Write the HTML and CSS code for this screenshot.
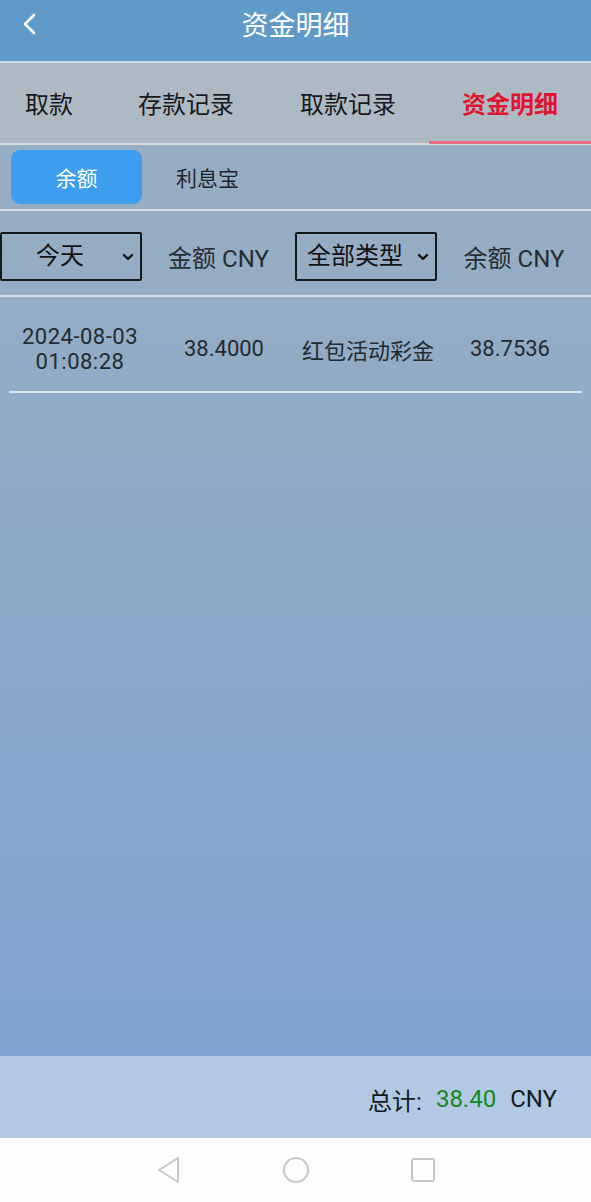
FILE: index.html
```html
<!DOCTYPE html>
<html lang="zh-CN">

<head>
  <meta charset="UTF-8">
  <meta name="viewport" content="width=device-width, initial-scale=1.0">
  <title>资金明细</title>
  <link rel="stylesheet" href="styles.css">
</head>

<body>
  <div class="page">
    <!-- Header -->
    <header class="header">
      <a class="back" href="#">
        <svg width="18" height="24" viewBox="0 0 18 24">
          <path d="M14 3 L5 12 L14 21" fill="none" stroke="#fff" stroke-width="2.6" stroke-linecap="round" stroke-linejoin="round" />
        </svg>
      </a>
      <h1>资金明细</h1>
    </header>

    <!-- Tabs -->
    <nav class="tabs">
      <a class="tab" href="#">取款</a>
      <a class="tab" href="#">存款记录</a>
      <a class="tab" href="#">取款记录</a>
      <a class="tab active" href="#">资金明细</a>
    </nav>

    <div class="subtabs">
      <button class="subtab active">余额</button>
      <button class="subtab">利息宝</button>
    </div>

    <div class="content">
      <div class="filters">
        <div class="cell">
          <div class="select-wrap">
            <select class="select">
              <option>今天</option>
              <option>昨天</option>
              <option>近7天</option>
            </select>
            <svg class="arrow" width="12" height="8" viewBox="0 0 12 8">
              <path d="M2 2 L6 6 L10 2" fill="none" stroke="#111" stroke-width="2.4" stroke-linecap="round" stroke-linejoin="round" />
            </svg>
          </div>
        </div>
        <div class="cell">金额 CNY</div>
        <div class="cell">
          <div class="select-wrap">
            <select class="select">
              <option>全部类型</option>
              <option>红包活动彩金</option>
            </select>
            <svg class="arrow" width="12" height="8" viewBox="0 0 12 8">
              <path d="M2 2 L6 6 L10 2" fill="none" stroke="#111" stroke-width="2.4" stroke-linecap="round" stroke-linejoin="round" />
            </svg>
          </div>
        </div>
        <div class="cell">余额 CNY</div>
      </div>

      <div class="rows">
        <div class="row">
          <div class="cell date">2024-08-03<br>01:08:28</div>
          <div class="cell">38.4000</div>
          <div class="cell">红包活动彩金</div>
          <div class="cell">38.7536</div>
        </div>
      </div>
    </div>

    <footer class="total">
      <span>总计:</span>
      <span class="amount">38.40</span>
      <span>CNY</span>
    </footer>

    <div class="sysbar">
      <svg width="26" height="28" viewBox="0 0 26 28">
        <path d="M22 2 L3 14 L22 26 Z" fill="none" stroke="#c8c8c8" stroke-width="2" stroke-linejoin="round" />
      </svg>
      <svg width="28" height="28" viewBox="0 0 28 28">
        <circle cx="14" cy="14" r="12" fill="none" stroke="#c8c8c8" stroke-width="2" />
      </svg>
      <svg width="26" height="26" viewBox="0 0 26 26">
        <rect x="2" y="2" width="22" height="22" rx="2" fill="none" stroke="#c8c8c8" stroke-width="2" />
      </svg>
    </div>
  </div>
</body>

</html>
```

FILE: styles.css
```css
* {
  box-sizing: border-box;
}

body {
  margin: 0;
  font-family: Roboto, "Noto Sans CJK SC", sans-serif;
  color: #1b1f24;
}

.page {
  width: 591px;
  height: 1202px;
  display: flex;
  flex-direction: column;
  overflow: hidden;
}

.header {
  height: 63px;
  background: #5f9ac8;
  border-bottom: 2px solid #c9dcec;
  display: flex;
  align-items: center;
  justify-content: center;
  position: relative;
}

.header h1 {
  margin: 0;
  color: #fff;
  font-size: 27px;
  font-weight: normal;
  margin-top: -14px;
}

.back {
  position: absolute;
  left: 20px;
  top: 12px;
}

.tabs {
  height: 82px;
  background: #aebac3;
  display: flex;
  margin-left: -8px;
  border-bottom: 2px solid #d4dade;
}

.tab {
  padding: 0 33px;
  font-size: 24px;
  color: #161a1e;
  text-decoration: none;
  display: flex;
  align-items: center;
  border-bottom: 3px solid transparent;
  margin-bottom: -1px;
}

.tab:nth-child(1) {
  padding-right: 32px;
}

.tab.active {
  color: #e0142e;
  font-weight: bold;
  border-bottom-color: #e8707c;
  flex: 1;
}

.subtabs {
  height: 66px;
  background: #97adc3;
  padding: 5px 11px;
  display: flex;
  border-bottom: 2px solid #d5dee6;
}

.subtab {
  width: 131px;
  border: none;
  background: transparent;
  border-radius: 9px;
  font-family: inherit;
  font-size: 21px;
  color: #1e252c;
}

.subtab.active {
  background: #3d9ef0;
  color: #fff;
}

.content {
  flex: 1;
  background: linear-gradient(to bottom, #97adc3, #7ea3d0);
}

.filters {
  height: 86px;
  display: grid;
  grid-template-columns: 148px 147px 148px 148px;
  align-items: center;
  border-bottom: 2px solid #d5dde6;
  font-size: 24px;
  color: #262c33;
  padding-top: 6px;
}

.filters .cell {
  text-align: center;
  padding-right: 6px;
}

.filters .cell:nth-child(odd) {
  padding-right: 0;
}

.select-wrap {
  width: 142px;
  height: 49px;
  position: relative;
}

.select {
  appearance: none;
  -webkit-appearance: none;
  width: 100%;
  height: 100%;
  border: 2px solid #16191c;
  border-radius: 2px;
  background: transparent;
  font-family: inherit;
  font-size: 24px;
  color: #111;
  text-align: center;
  text-align-last: center;
  padding: 0 22px 0 0;
}

.arrow {
  position: absolute;
  right: 8px;
  top: 21px;
}

.rows {
  padding: 0 9px;
}

.row {
  height: 96px;
  display: grid;
  grid-template-columns: 142px 146px 142px 142px;
  align-items: center;
  border-bottom: 2px solid #dbe3ec;
  font-size: 22px;
  color: #232a31;
  text-align: center;
  padding-top: 9px;
}

.row .date {
  line-height: 25px;
  letter-spacing: 0.5px;
}

.total {
  height: 82px;
  background: #b3c8e2;
  display: flex;
  justify-content: flex-end;
  align-items: center;
  gap: 14px;
  padding-right: 34px;
  font-size: 24px;
  color: #15191d;
  padding-top: 4px;
}

.total .amount {
  color: #138a1c;
}

.sysbar {
  height: 64px;
  background: #fefefe;
  display: flex;
  justify-content: center;
  align-items: center;
  gap: 100px;
}
```
